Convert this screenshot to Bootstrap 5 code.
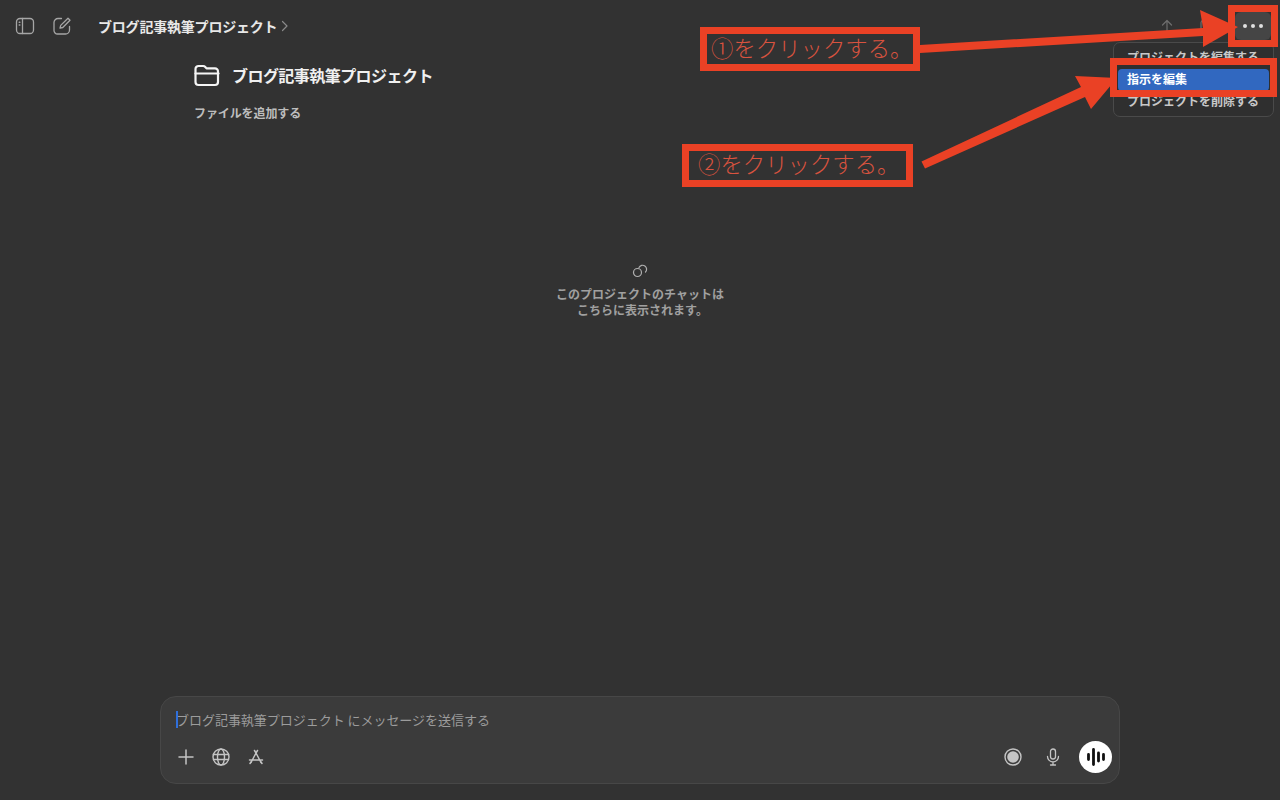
<!DOCTYPE html>
<html lang="ja">
<head>
<meta charset="utf-8">
<title>ブログ記事執筆プロジェクト</title>
<link href="https://cdn.jsdelivr.net/npm/bootstrap@5.3.0/dist/css/bootstrap.min.css" rel="stylesheet">
<style>
html,body{height:100%;margin:0;overflow:hidden}
body{background:#323232;color:#ececec;font-family:"Noto Sans CJK JP","Noto Sans",sans-serif;font-size:12px}
.shell{width:1280px;height:800px;position:relative}
.topbar{height:52px;padding-left:15px;padding-right:9px}
.ico{display:block;fill:none;stroke:currentColor;stroke-linecap:round;stroke-linejoin:round}
.ico-dim{color:#a6a6a6}
.gap-side{gap:17px}
.crumb{margin-left:26px;font-size:14px;font-weight:700;color:#e8e8e8;letter-spacing:-.2px;line-height:20px}
.chev{color:#8a8a8a;margin-left:4px}
.top-right{gap:27px;color:#6e6e6e}
.dots-btn{width:36px;height:28px;background:#454545;border-radius:6px;margin-left:-4px}
.dots-btn i{width:4px;height:4px;border-radius:50%;background:#e0e0e0;display:block}
.proj{width:892px;margin:0 auto}
.proj-head{gap:12px;height:30px;margin-top:8px}
.proj-title{font-size:16px;font-weight:700;color:#f0f0f0;letter-spacing:-.55px;line-height:24px}
.add-file{font-size:12px;font-weight:700;color:#bdbdbd;margin-top:14px;line-height:18px;letter-spacing:-.1px}
.empty{margin-top:142px;color:#a0a0a0;font-size:12px;font-weight:700;line-height:16px;text-align:center}
.empty .ico{margin:0 auto 8px;color:#b0b0b0}
.empty-second{padding-left:5px}
.composer{width:960px;height:88px;background:#3b3b3b;border:1px solid #474747;border-radius:16px;margin:0 auto 16px;padding:13px 7px 8px 15px}
.ph{font-size:13px;line-height:20px;color:#9c9c9c;position:relative;letter-spacing:-.03px}
.caret-bar{position:absolute;left:0;top:1px;width:2px;height:17px;background:#2f6fdb}
.tools{margin-top:11px;height:32px;color:#c4c4c4}
.tools-left{gap:17px;margin-left:1px}
.tools-right{gap:22px}
.voice{width:33px;height:32px;border-radius:50%;background:#fff;color:#111;margin-left:-5px}
.pop{position:absolute;left:1113px;top:42px;width:161px;height:75px;background:#2f2f2f;border:1px solid #4a4a4a;border-radius:7px;padding:4px;font-size:12px;font-weight:700;color:#c8c8c8}
.pop-item{height:22px;line-height:20px;padding-left:9px;border-radius:4px;white-space:nowrap}
.pop-on{background:#3168c0;color:#fff}
.mark-box{position:absolute;border:7px solid #ea4125;display:flex;align-items:center}
.mark-text{color:#d9533f;font-size:22.4px;font-weight:300;line-height:1;white-space:nowrap;margin-bottom:4px}
.arrows{position:absolute;left:0;top:0}
</style>
</head>
<body>
<div class="shell d-flex flex-column">
  <header class="topbar d-flex align-items-center justify-content-between">
    <div class="d-flex align-items-center">
      <div class="d-flex align-items-center gap-side ico-dim">
        <svg class="ico" width="20" height="20" viewBox="0 0 20 20" stroke-width="1.3"><rect x="1.5" y="2.5" width="17" height="15" rx="3.5"/><path d="M7.5 2.5v15"/><path d="M4.3 6.3h.5M4.3 9h.5" stroke-width="1.6"/></svg>
        <svg class="ico" width="20" height="20" viewBox="0 0 20 20" stroke-width="1.3"><path d="M9.5 2.5H6a4 4 0 0 0-4 4v8a3.5 3.5 0 0 0 3.5 3.5h8a4 4 0 0 0 4-4v-3.5"/><path d="M16 2.2l2 2-7.2 7.300-2.800.7.7-2.800z"/></svg>
      </div>
      <span class="crumb">ブログ記事執筆プロジェクト</span>
      <svg class="ico chev" width="8" height="12" viewBox="0 0 8 12" stroke-width="1.2"><path d="M1.500 1.500l4.500 4.500-4.500 4.500"/></svg>
    </div>
    <div class="d-flex align-items-center top-right">
      <svg class="ico" width="12" height="14" viewBox="0 0 12 14" stroke-width="1.2"><path d="M6 13V1.500M1.500 6L6 1.500 10.500 6"/></svg>
      <svg class="ico" width="12" height="14" viewBox="0 0 12 14" stroke-width="1.200"><rect x="1" y="1" width="10" height="12" rx="3"/></svg>
      <div class="dots-btn d-flex align-items-center justify-content-center gap-1"><i></i><i></i><i></i></div>
    </div>
  </header>

  <main class="flex-grow-1">
    <div class="proj">
      <div class="proj-head d-flex align-items-center">
        <svg class="ico" width="26" height="24" viewBox="0 0 26 24" stroke-width="2.200" style="color:#f5f5f5"><path d="M1.500 10V6a3 3 0 0 1 3-3h4.600a3 3 0 0 1 2.200 1l1.200 1.400h8.500a3 3 0 0 1 3 3V19a3 3 0 0 1-3 3H4.500a3 3 0 0 1-3-3z"/><path d="M1.500 10.500h23"/></svg>
        <span class="proj-title">ブログ記事執筆プロジェクト</span>
      </div>
      <div class="add-file">ファイルを追加する</div>
    </div>
    <div class="empty">
      <svg class="ico" width="16" height="14" viewBox="0 0 16 14" stroke-width="1.200"><circle cx="5.500" cy="8.500" r="4"/><path d="M7 3.500a4 4 0 1 1 6.500 4.500"/></svg>
      <div>このプロジェクトのチャットは</div>
      <div class="empty-second">こちらに表示されます。</div>
    </div>
  </main>

  <section class="composer">
    <div class="ph"><span class="caret-bar"></span>ブログ記事執筆プロジェクト にメッセージを送信する</div>
    <div class="tools d-flex align-items-center justify-content-between">
      <div class="d-flex align-items-center tools-left">
        <svg class="ico" width="18" height="18" viewBox="0 0 18 18" stroke-width="1.500"><path d="M9 2v14M2 9h14"/></svg>
        <svg class="ico" width="18" height="18" viewBox="0 0 18 18" stroke-width="1.400"><circle cx="9" cy="9" r="8"/><ellipse cx="9" cy="9" rx="3.500" ry="8"/><path d="M1.500 6.500h15M1.500 11.500h15"/></svg>
        <svg class="ico" width="18" height="18" viewBox="0 0 18 18" stroke-width="1.500"><path d="M7.500 2.500L9 5M10.500 2.500L9 5M9 5L4 14.500M9 5l5 9.500M2.500 12h13"/><path d="M3 15.500l1-1.500M15 15.500l-1-1.500"/></svg>
      </div>
      <div class="d-flex align-items-center tools-right">
        <svg class="ico" width="18" height="18" viewBox="0 0 18 18" stroke-width="1.400"><circle cx="9" cy="9" r="8"/><circle cx="9" cy="9" r="5.800" fill="currentColor" stroke="none"/></svg>
        <svg class="ico" width="18" height="18" viewBox="0 0 18 18" stroke-width="1.300"><rect x="6.500" y="1" width="5" height="10" rx="2.500"/><path d="M3.500 8.500a5.500 5.500 0 0 0 11 0M9 14v3M6.500 17h5"/></svg>
        <div class="voice d-flex align-items-center justify-content-center">
          <svg class="ico" width="20" height="20" viewBox="0 0 20 20" stroke-width="2.800"><path d="M2.500 7.500v5M7.500 2.500v15M12.500 6v8M17.500 7.500v5"/></svg>
        </div>
      </div>
    </div>
  </section>

  <div class="pop">
    <div class="pop-item">プロジェクトを編集する</div>
    <div class="pop-item pop-on">指示を編集</div>
    <div class="pop-item">プロジェクトを削除する</div>
  </div>

  <svg class="arrows" width="1280" height="800" viewBox="0 0 1280 800">
    <path fill="#ea4125" d="M920 45L1203 28L1200 10L1238 27L1203 47L1203 36L920 53z"/>
    <path fill="#ea4125" d="M921.500 161.500L1081 87L1075 76L1117 78L1091 109L1085 97L925 168.500z"/>
  </svg>
  <div class="mark-box" style="left:700px;top:27px;width:220px;height:44px;padding-left:4px"><span class="mark-text">①をクリックする。</span></div>
  <div class="mark-box" style="left:682px;top:144px;width:231px;height:43px;padding-left:9px"><span class="mark-text">②をクリックする。</span></div>
  <div class="mark-box" style="left:1228px;top:5px;width:50px;height:42px"></div>
  <div class="mark-box" style="left:1110px;top:58px;width:167px;height:39px"></div>
</div>
<script src="https://cdn.jsdelivr.net/npm/bootstrap@5.3.0/dist/js/bootstrap.bundle.min.js"></script>
</body>
</html>
